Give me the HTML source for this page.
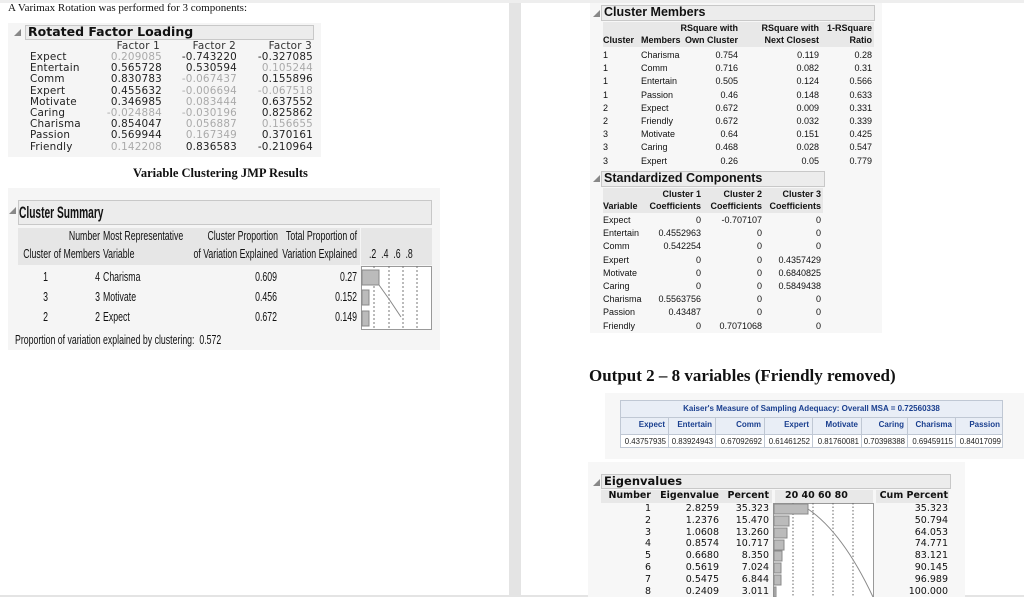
<!DOCTYPE html>
<html><head><meta charset="utf-8"><style>
*{margin:0;padding:0;box-sizing:border-box}
body{width:1024px;height:597px;background:#fff;position:relative;overflow:hidden;font-family:"Liberation Sans",sans-serif;color:#111}
.a{position:absolute;white-space:nowrap}
.r{text-align:right}
.serif{font-family:"Liberation Serif",serif}
.dv{font-family:"DejaVu Sans",sans-serif}
.hb{position:absolute;background:#ececec;border:1px solid #c8c8c8}
.tri{position:absolute;width:0;height:0;border-left:7px solid transparent;border-bottom:7px solid #888}
</style></head><body>
<div class="a" style="left:0;top:0;width:1024px;height:3px;background:#eee"></div>
<div class="a serif" style="left:8px;top:2px;font-size:11px">A Varimax Rotation was performed for 3 components:</div>

<div class="a" style="left:8px;top:23px;width:313px;height:134px;background:#f5f5f5"></div>
<div class="tri" style="left:14px;top:29px"></div>
<div class="hb" style="left:25px;top:25px;width:289px;height:15px"></div>
<div class="a dv" style="left:28px;top:24px;font-size:12.5px;font-weight:bold">Rotated Factor Loading</div>
<div id="rfl"></div>

<div class="a serif" style="left:133px;top:166px;font-size:12.5px;font-weight:bold">Variable Clustering JMP Results</div>

<div class="a" style="left:8px;top:188px;width:432px;height:162px;background:#f5f5f5"></div>
<div class="tri" style="left:9px;top:207px"></div>
<div class="hb" style="left:18px;top:200px;width:414px;height:25px"></div>
<div class="a" style="left:19px;top:203px;font-size:17px;font-weight:bold;transform:scaleX(.6);transform-origin:0 0">Cluster Summary</div>
<div class="a" style="left:18px;top:228px;width:342px;height:37px;background:#e6e6e6"></div>
<div class="a" style="left:361px;top:228px;width:71px;height:37px;background:#e6e6e6"></div>
<div id="cs"></div>
<div class="a" style="left:361px;top:266px;width:71px;height:64px;border:1px solid #999;background:#fff"></div>
<svg class="a" style="left:361px;top:266px" width="72" height="65">
<g stroke="#777" stroke-dasharray="2,2"><line x1="13" y1="0" x2="13" y2="64"/><line x1="28" y1="0" x2="28" y2="64"/><line x1="42" y1="0" x2="42" y2="64"/><line x1="56" y1="0" x2="56" y2="64"/></g>
<rect x="1" y="4" width="17" height="15" fill="#bbb" stroke="#888"/>
<rect x="1" y="24" width="7" height="15" fill="#bbb" stroke="#888"/>
<rect x="1" y="45" width="7" height="15" fill="#bbb" stroke="#888"/>
<polyline points="18,19 28,33 40,51" fill="none" stroke="#888"/>
</svg>
<div class="a" style="left:15px;top:333px;font-size:12.5px;transform:scaleX(.7);transform-origin:0 0">Proportion of variation explained by clustering:&nbsp; 0.572</div>

<div class="a" style="left:509px;top:3px;width:12px;height:594px;background:#e4e4e4"></div>
<div class="a" style="left:0;top:595px;width:1024px;height:2px;background:#e4e4e4"></div>

<div class="a" style="left:590px;top:3px;width:292px;height:330px;background:#f7f7f7"></div>
<div class="tri" style="left:593px;top:10px"></div>
<div class="hb" style="left:601px;top:5px;width:274px;height:16px"></div>
<div class="a" style="left:604px;top:5px;font-size:12.5px;font-weight:bold">Cluster Members</div>
<div class="a" style="left:603px;top:22px;width:271px;height:25px;background:#e8e8e8"></div>
<div id="cm"></div>
<div class="tri" style="left:593px;top:175px"></div>
<div class="hb" style="left:601px;top:171px;width:224px;height:16px"></div>
<div class="a" style="left:604px;top:171px;font-size:12.5px;font-weight:bold">Standardized Components</div>
<div class="a" style="left:603px;top:188px;width:220px;height:25px;background:#e8e8e8"></div>
<div id="sc"></div>

<div class="a serif" style="left:589px;top:366px;font-size:17px;font-weight:bold">Output 2 – 8 variables (Friendly removed)</div>

<div class="a" style="left:605px;top:393px;width:419px;height:66px;background:#f7f7f7"></div>
<div id="k"></div>

<div class="a" style="left:588px;top:462px;width:377px;height:135px;background:#f7f7f7"></div>
<div class="tri" style="left:593px;top:479px"></div>
<div class="hb" style="left:601px;top:474px;width:350px;height:15px"></div>
<div class="a dv" style="left:604px;top:474px;font-size:11.5px;font-weight:bold">Eigenvalues</div>
<div class="a" style="left:601px;top:490px;width:171px;height:13px;background:#e8e8e8"></div>
<div class="a" style="left:775px;top:490px;width:98px;height:13px;background:#e8e8e8"></div>
<div class="a" style="left:876px;top:490px;width:73px;height:13px;background:#e8e8e8"></div>
<div class="a" style="left:773px;top:503px;width:101px;height:94px;border:1px solid #999;border-bottom:none;background:#fff"></div>
<svg class="a" style="left:773px;top:503px" width="101" height="94">
<g stroke="#666" stroke-dasharray="1.5,2"><line x1="20" y1="0" x2="20" y2="94"/><line x1="40" y1="0" x2="40" y2="94"/><line x1="60" y1="0" x2="60" y2="94"/><line x1="80" y1="0" x2="80" y2="94"/></g>
<g fill="#bbb" stroke="#888">
<rect x="1" y="1" width="34" height="10"/><rect x="1" y="13" width="15" height="10"/><rect x="1" y="25" width="13" height="10"/><rect x="1" y="37" width="10" height="10"/><rect x="1" y="48" width="8" height="10"/><rect x="1" y="60" width="7" height="10"/><rect x="1" y="72" width="7" height="10"/><rect x="1" y="84" width="2" height="10"/></g>
<path d="M35,6 Q70,30 100,94" fill="none" stroke="#888"/>
</svg>
<div id="ev"></div>

<script>
function put(id,html){document.getElementById(id).outerHTML=html}
function t(x,y,s,st,right){return '<div class="a'+(right?' r':'')+'" style="'+(right?'left:'+(x-200)+'px;width:200px;':'left:'+x+'px;')+'top:'+y+'px;'+(st||'')+'">'+s+'</div>'}
var rf=[["Expect","0.209085g","-0.743220","-0.327085"],["Entertain","0.565728","0.530594","0.105244g"],["Comm","0.830783","-0.067437g","0.155896"],["Expert","0.455632","-0.006694g","-0.067518g"],["Motivate","0.346985","0.083444g","0.637552"],["Caring","-0.024884g","-0.030196g","0.825862"],["Charisma","0.854047","0.056887g","0.156655g"],["Passion","0.569944","0.167349g","0.370161"],["Friendly","0.142208g","0.836583","-0.210964"]];
var h='',st='font-family:DejaVu Sans,sans-serif;font-size:10.4px;letter-spacing:.2px;color:#222;';
h+=t(160,40,'Factor 1',st+'color:#333;',1)+t(236,40,'Factor 2',st+'color:#333;',1)+t(312,40,'Factor 3',st+'color:#333;',1);
rf.forEach(function(r,i){var y=51+i*11.2;h+=t(30,y,r[0],st);[162,237,313].forEach(function(x,j){var v=r[j+1],g=v.slice(-1)=='g';if(g)v=v.slice(0,-1);h+=t(x,y,v,st+(g?'color:#aaa;':''),1)})});
put('rfl',h);
h='';var cs='font-size:12.5px;transform:scaleX(.7);transform-origin:100% 0;';var csl='font-size:12.5px;transform:scaleX(.7);transform-origin:0 0;';
h+=t(100,229,'Number',cs,1)+t(103,229,'Most Representative',csl)+t(278,229,'Cluster Proportion',cs,1)+t(357,229,'Total Proportion of',cs,1);
h+=t(51,247,'Cluster',cs,1)+t(100,247,'of Members',cs,1)+t(103,247,'Variable',csl)+t(278,247,'of Variation Explained',cs,1)+t(357,247,'Variation Explained',cs,1)+t(369,247,'.2&nbsp;&nbsp;.4&nbsp;&nbsp;.6&nbsp;&nbsp;.8',csl);
[["1","4","Charisma","0.609","0.27"],["3","3","Motivate","0.456","0.152"],["2","2","Expect","0.672","0.149"]].forEach(function(r,i){var y=270+i*20;h+=t(48,y,r[0],cs,1)+t(100,y,r[1],cs,1)+t(103,y,r[2],csl)+t(277,y,r[3],cs,1)+t(357,y,r[4],cs,1)});
put('cs',h);
h='';var f='font-size:9px;';var fb='font-size:9px;font-weight:bold;';
h+=t(738,23,'RSquare with',fb,1)+t(819,23,'RSquare with',fb,1)+t(872,23,'1-RSquare',fb,1);
h+=t(603,35,'Cluster',fb)+t(641,35,'Members',fb)+t(738,35,'Own Cluster',fb,1)+t(819,35,'Next Closest',fb,1)+t(872,35,'Ratio',fb,1);
[["1","Charisma","0.754","0.119","0.28"],["1","Comm","0.716","0.082","0.31"],["1","Entertain","0.505","0.124","0.566"],["1","Passion","0.46","0.148","0.633"],["2","Expect","0.672","0.009","0.331"],["2","Friendly","0.672","0.032","0.339"],["3","Motivate","0.64","0.151","0.425"],["3","Caring","0.468","0.028","0.547"],["3","Expert","0.26","0.05","0.779"]].forEach(function(r,i){var y=50+i*13.2;h+=t(603,y,r[0],f)+t(641,y,r[1],f)+t(738,y,r[2],f,1)+t(819,y,r[3],f,1)+t(872,y,r[4],f,1)});
put('cm',h);
h='';
h+=t(701,189,'Cluster 1',fb,1)+t(762,189,'Cluster 2',fb,1)+t(821,189,'Cluster 3',fb,1);
h+=t(603,201,'Variable',fb)+t(701,201,'Coefficients',fb,1)+t(762,201,'Coefficients',fb,1)+t(821,201,'Coefficients',fb,1);
[["Expect","0","-0.707107","0"],["Entertain","0.4552963","0","0"],["Comm","0.542254","0","0"],["Expert","0","0","0.4357429"],["Motivate","0","0","0.6840825"],["Caring","0","0","0.5849438"],["Charisma","0.5563756","0","0"],["Passion","0.43487","0","0"],["Friendly","0","0.7071068","0"]].forEach(function(r,i){var y=215+i*13.2;h+=t(603,y,r[0],f)+t(701,y,r[1],f,1)+t(762,y,r[2],f,1)+t(821,y,r[3],f,1)});
put('sc',h);
var xs=[620,668,715,764,812,861,907,955,1003];
h='<div class="a" style="left:620px;top:400px;width:383px;height:48px;border:1px solid #c0c8d4;background:#fff"></div>';
h+='<div class="a" style="left:621px;top:401px;width:381px;height:33px;background:#e9eef6"></div>';
h+='<div class="a" style="left:621px;top:404px;width:381px;text-align:center;font-size:8px;font-weight:bold;color:#1a3f8f">Kaiser\'s Measure of Sampling Adequacy: Overall MSA = 0.72560338</div>';
h+='<div class="a" style="left:621px;top:417px;width:381px;height:1px;background:#c0c8d4"></div><div class="a" style="left:621px;top:434px;width:381px;height:1px;background:#c0c8d4"></div>';
var kn=["Expect","Entertain","Comm","Expert","Motivate","Caring","Charisma","Passion"],kv=["0.43757935","0.83924943","0.67092692","0.61461252","0.81760081","0.70398388","0.69459115","0.84017099"];
for(var i=0;i<8;i++){if(i>0)h+='<div class="a" style="left:'+xs[i]+'px;top:417px;width:1px;height:31px;background:#c0c8d4"></div>';h+=t(xs[i+1]-3,420,kn[i],'font-size:8px;font-weight:bold;color:#1a3f8f;',1);h+=t(xs[i+1]-2,437,kv[i],'font-size:7.8px;color:#222;',1)}
put('k',h);
h='';var e='font-family:DejaVu Sans,sans-serif;font-size:9.5px;';var eb=e+'font-weight:bold;';
h+=t(651,490,'Number',eb,1)+t(719,490,'Eigenvalue',eb,1)+t(769,490,'Percent',eb,1)+t(785,490,'20&nbsp;40&nbsp;60&nbsp;80',eb)+t(948,490,'Cum Percent',eb,1);
[["1","2.8259","35.323","35.323"],["2","1.2376","15.470","50.794"],["3","1.0608","13.260","64.053"],["4","0.8574","10.717","74.771"],["5","0.6680","8.350","83.121"],["6","0.5619","7.024","90.145"],["7","0.5475","6.844","96.989"],["8","0.2409","3.011","100.000"]].forEach(function(r,i){var y=503+i*11.8;h+=t(651,y,r[0],e,1)+t(719,y,r[1],e,1)+t(769,y,r[2],e,1)+t(948,y,r[3],e,1)});
put('ev',h);
</script>
</body></html>
